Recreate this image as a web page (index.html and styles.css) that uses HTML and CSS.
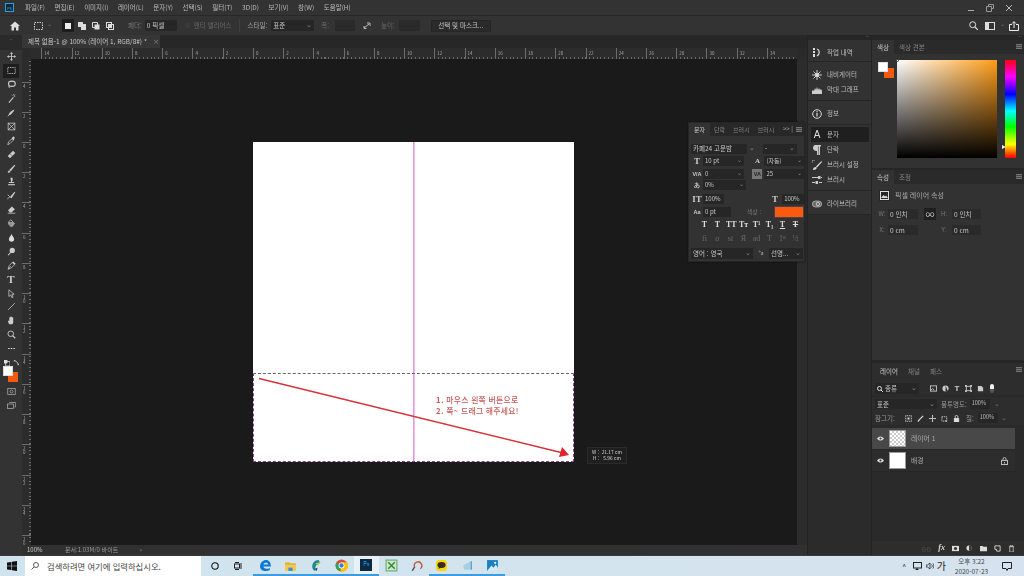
FILE: index.html
```html
<!DOCTYPE html>
<html lang="ko">
<head>
<meta charset="utf-8">
<title>Photoshop</title>
<link rel="stylesheet" href="styles.css">
</head>
<body>
<div class="app">
  <header class="menubar">
    <span class="pslogo">Ps</span>
    <nav class="menus"><span>파일(F)</span><span>편집(E)</span><span>이미지(I)</span><span>레이어(L)</span><span>문자(Y)</span><span>선택(S)</span><span>필터(T)</span><span>3D(D)</span><span>보기(V)</span><span>창(W)</span><span>도움말(H)</span></nav>
    <div class="winctl">
      <svg width="8" height="8" viewBox="0 0 8 8"><path d="M1 6.5h6" stroke="#aaa"/></svg>
      <svg width="8" height="8" viewBox="0 0 8 8"><path d="M2.5 2.5V.5h5v4H5.5M.5 2.5h5v5h-5z" fill="none" stroke="#999"/></svg>
      <svg width="8" height="8" viewBox="0 0 8 8"><path d="M1 1l6 6M7 1l-6 6" stroke="#bbb"/></svg>
    </div>
  </header>

  <div class="options">
    <svg class="home" width="10" height="10" viewBox="0 0 10 10"><path d="M5 .5L10 5H8.5v4.500H6V6.500H4V9.500H1.500V5H0z" fill="#ddd"/></svg>
    <svg class="marq" width="9" height="8" viewBox="0 0 9 8"><rect x=".5" y=".5" width="8" height="7" fill="none" stroke="#ccc" stroke-dasharray="1.500 1"/></svg>
    <span class="chev">⌄</span>
    <span class="mode mode-on"><svg width="6" height="6" viewBox="0 0 6 6"><rect width="6" height="6" fill="#eee"/></svg></span>
    <span class="mode"><svg width="8" height="8" viewBox="0 0 8 8"><path d="M0 0h5v2h3v6H3V5H0z" fill="#ddd"/></svg></span>
    <span class="mode"><svg width="8" height="8" viewBox="0 0 8 8"><path d="M.5.500h5v5h-5z" fill="none" stroke="#ddd"/><path d="M2.500 2.500h5v5h-5z" fill="#ddd"/></svg></span>
    <span class="mode"><svg width="8" height="8" viewBox="0 0 8 8"><rect x=".5" y=".5" width="5" height="5" fill="none" stroke="#ddd"/><rect x="2.500" y="2.500" width="5" height="5" fill="none" stroke="#ddd"/><rect x="2.500" y="2.500" width="3" height="3" fill="#ddd"/></svg></span>
    <span class="opt-label feather">페더:</span>
    <span class="field f-feather">0 픽셀</span>
    <span class="check"></span>
    <span class="opt-label dim">앤티 앨리어스</span>
    <span class="opt-sep"></span>
    <span class="opt-label">스타일:</span>
    <span class="field f-style">표준<i>⌄</i></span>
    <span class="opt-label dim w-label">폭:</span>
    <span class="field f-w"></span>
    <svg class="swap" width="9" height="7" viewBox="0 0 9 7"><path d="M1 6l5-4M4 1h3v3M1 4v2.500h2.500" fill="none" stroke="#bbb"/></svg>
    <span class="opt-label dim h-label">높이:</span>
    <span class="field f-h"></span>
    <span class="mask-btn">선택 및 마스크...</span>
    <div class="opt-right">
      <svg width="9" height="9" viewBox="0 0 9 9"><circle cx="3.700" cy="3.700" r="3" fill="none" stroke="#ddd"/><path d="M6 6l3 3" stroke="#ddd" stroke-width="1.200"/></svg>
      <svg width="10" height="8" viewBox="0 0 10 8"><rect x=".5" y=".5" width="9" height="7" fill="none" stroke="#ddd"/><rect x="1" y="1" width="3" height="6" fill="#ddd"/></svg>
      <span class="chev">⌄</span>
      <svg width="10" height="10" viewBox="0 0 10 10"><path d="M3 3.500H.5v6h9v-6H7M5 7V.8M3.200 2.500L5 .7l1.800 1.800" fill="none" stroke="#eee"/></svg>
    </div>
  </div>

  <main class="main">
    <aside class="toolbar">
      <div class="grip">··</div>
      <div class="tool"><svg viewBox="0 0 12 12"><path d="M6 0l2 2.500H6.600v3h3V4L12 6 9.600 8V6.500h-3v3H8L6 12 4 9.500h1.400v-3h-3V8L0 6l2.400-2v1.500h3v-3H4z" fill="#ccc"/></svg></div>
      <div class="tool tool-on"><svg viewBox="0 0 12 12"><rect x="1" y="2" width="10" height="8" fill="none" stroke="#ccc" stroke-dasharray="2 1"/></svg></div>
      <div class="tool"><svg viewBox="0 0 12 12"><ellipse cx="6.500" cy="5" rx="4.500" ry="3.500" fill="none" stroke="#ccc" stroke-width="1.500"/><path d="M3 8c-2 2 1 3 1 1" fill="none" stroke="#ccc"/></svg></div>
      <div class="tool"><svg viewBox="0 0 12 12"><path d="M2 11l6-7 1 1-6 7z" fill="#ccc"/><path d="M9 0v2M11 3h-2M7 2L6 1M11 1l-1 1" stroke="#ccc"/></svg></div>
      <div class="tool"><svg viewBox="0 0 12 12"><path d="M2 9c1-3 5-6 8-7-1 3-4 6-6 7.500z" fill="#ccc"/><path d="M1 11l2-2" stroke="#ccc"/></svg></div>
      <div class="tool"><svg viewBox="0 0 12 12"><rect x="1.500" y="1.500" width="9" height="9" fill="none" stroke="#ccc"/><path d="M1.500 1.500l9 9M10.500 1.500l-9 9" stroke="#ccc"/></svg></div>
      <div class="tool"><svg viewBox="0 0 12 12"><path d="M1 11.500L2 8l4-4 2 2-4 4z" fill="none" stroke="#ccc"/><path d="M6 3l2-2c1-1 3 1 2 2L9 6z" fill="#ccc"/></svg></div>
      <div class="tool"><svg viewBox="0 0 12 12"><path d="M1 8l7-7 3 3-7 7z" fill="#ccc"/><path d="M4.500 5.500l2 2" stroke="#333"/></svg></div>
      <div class="tool"><svg viewBox="0 0 12 12"><path d="M3 8l7-7 1 1-6 7.500z" fill="#ccc"/><path d="M1 11.500c0-2 1-3 2.500-3l1 1c0 1.500-2 2-3.500 2z" fill="#ccc"/></svg></div>
      <div class="tool"><svg viewBox="0 0 12 12"><path d="M4.500 1h3v3l-1 2.500H9.500V8h-7V6.500h3z" fill="#ccc"/><path d="M1.500 9.500h9V11h-9z" fill="#ccc"/></svg></div>
      <div class="tool"><svg viewBox="0 0 12 12"><path d="M4 8l6-7 1 1-5 7.500z" fill="#ccc"/><path d="M1 11c0-1.500 1-2.500 2.500-2.500M1 5l4 4" stroke="#ccc" fill="none"/></svg></div>
      <div class="tool"><svg viewBox="0 0 12 12"><path d="M1.500 7l5-5 4 3.500L6 10H3.500z" fill="#ccc"/><path d="M1 11h10" stroke="#ccc"/></svg></div>
      <div class="tool"><svg viewBox="0 0 12 12"><path d="M2 4l3-3 5 5-3 4C5 11 1 7 2 4z" fill="none" stroke="#ccc"/><path d="M2 4h7l1 2-3 4C5 11 2 7 2 4z" fill="#999"/></svg></div>
      <div class="tool"><svg viewBox="0 0 12 12"><path d="M6 .5C6 3 9.500 5.500 9.500 8a3.500 3.500 0 0 1-7 0C2.500 5.500 6 3 6 .5z" fill="#ddd"/></svg></div>
      <div class="tool"><svg viewBox="0 0 12 12"><circle cx="7" cy="4.500" r="3.500" fill="#ccc"/><path d="M5 7l-3.500 4" stroke="#ccc" stroke-width="1.500"/></svg></div>
      <div class="tool"><svg viewBox="0 0 12 12"><path d="M1.500 11L3 6l4-4 3 3-4 4zM1.500 11L5 7" fill="none" stroke="#ccc"/><path d="M7 2l1.500-1.500 3 3L10 5z" fill="#ccc"/></svg></div>
      <div class="tool tool-t">T</div>
      <div class="tool"><svg viewBox="0 0 12 12"><path d="M2.500 1l7 6H6.500l1.500 4-1.500.500L5 8 2.500 10z" fill="none" stroke="#ccc"/></svg></div>
      <div class="tool"><svg viewBox="0 0 12 12"><path d="M1.500 10.500l9-9" stroke="#ccc"/></svg></div>
      <div class="tool"><svg viewBox="0 0 12 12"><path d="M3 11C1 8 1 6 2 6l1 1V2.500c0-1 1-1 1.200 0V1.500c0-1 1.300-1 1.300 0v0c0-1 1.500-1 1.500 0v1c0-1 1.300-1 1.300 0V8c0 2-1 3-1.500 3z" fill="#ccc"/></svg></div>
      <div class="tool"><svg viewBox="0 0 12 12"><circle cx="5" cy="5" r="3.700" fill="none" stroke="#ccc" stroke-width="1.200"/><path d="M7.500 7.500l3.500 3.500" stroke="#ccc" stroke-width="1.600"/></svg></div>
      <div class="tool"><svg viewBox="0 0 12 12"><path d="M1.500 6h2M5 6h2M8.500 6h2" stroke="#ddd" stroke-width="1.600"/></svg></div>
      <div class="tool tool-mini">
        <svg width="7" height="7" viewBox="0 0 7 7"><rect x="2" y="2" width="5" height="5" fill="#222" stroke="#ddd"/><rect width="4" height="4" fill="#ddd"/></svg>
        <svg width="7" height="7" viewBox="0 0 7 7"><path d="M1 1c3 0 5 2 5 5M1 1l2-1M6 6l1-2" fill="none" stroke="#ccc"/></svg>
      </div>
      <div class="swatches"><span class="sw-bg"></span><span class="sw-fg"></span></div>
      <div class="tool"><svg viewBox="0 0 12 12"><rect x="1" y="2" width="10" height="8" fill="none" stroke="#aaa"/><circle cx="6" cy="6" r="2" fill="none" stroke="#aaa"/></svg></div>
      <div class="tool"><svg viewBox="0 0 12 12"><rect x=".5" y="4" width="8" height="6" fill="none" stroke="#aaa"/><path d="M3 2h8.500v6H10" fill="none" stroke="#aaa"/></svg></div>
    </aside>

    <section class="docarea">
      <div class="tabrow"><div class="doctab">제목 없음-1 @ 100% (레이어 1, RGB/8#) *<i>×</i></div></div>
      <div class="ruler-h">
        <span>14</span><span>12</span><span>10</span><span>8</span><span>6</span><span>4</span><span>2</span><span>0</span><span>2</span><span>4</span><span>6</span><span>8</span><span>10</span><span>12</span><span>14</span><span>16</span><span>18</span><span>20</span><span>22</span><span>24</span><span>26</span><span>28</span><span>30</span><span>32</span><span>34</span>
      </div>
      <div class="work">
        <div class="ruler-v">
          <span>4</span><span>2</span><span>0</span><span>2</span><span>4</span><span>6</span><span>8</span><span>10</span><span>12</span><span>14</span><span>16</span><span>18</span><span>20</span><span>22</span><span>24</span><span>26</span>
        </div>
        <div class="pasteboard">
          <div class="doc">
            <div class="guide"></div>
            <div class="selection"></div>
            <svg class="arrow" width="321" height="320" viewBox="0 0 321 320"><path d="M6 236.500L308 310.500" stroke="#d4343a" stroke-width="1.500"/><path d="M316 313l-7-8-3 10z" fill="#e0242c"/></svg>
            <div class="note"><p><b>1.</b> 마우스 왼쪽 버튼으로</p><p><b>2.</b> 쭉~ 드래그 해주세요!</p></div>
          </div>
          <div class="measure"><span>W :&nbsp;&nbsp;21.17 cm</span><span>H :&nbsp;&nbsp;&nbsp;5.96 cm</span></div>
        </div>
        <div class="vscroll"></div>
      </div>
      <div class="status"><span class="st-zoom">100%</span><span class="st-doc">문서:1.03M/0 바이트</span><span class="st-arrow">›</span></div>
    </section>

    <aside class="dock1">
      <div class="grip grip-r">··</div>
      <div class="dock-group g-hist">
        <div class="dock-item"><svg viewBox="0 0 10 10"><path d="M1 0h2v2H1zM1 3h2v2H1zM1 6h2v3H1z" fill="#ddd"/><path d="M5 1c3 1 3 5 0 7" fill="none" stroke="#ddd" stroke-width="1.200"/></svg>작업 내역</div>
      </div>
      <div class="dock-group">
        <div class="dock-item"><svg viewBox="0 0 10 10"><path d="M5 0v10M0 5h10M1.500 1.500l7 7M8.500 1.500l-7 7" stroke="#ccc"/><circle cx="5" cy="5" r="2" fill="#ddd"/></svg>내비게이터</div>
        <div class="dock-item"><svg viewBox="0 0 10 10"><path d="M0 9V6l1-1 1 1 1-3 1 2 1-3 1 3 1-2 1 2 1-1 1 2v3z" fill="#ccc"/></svg>막대 그래프</div>
      </div>
      <div class="dock-group">
        <div class="dock-item"><svg viewBox="0 0 10 10"><circle cx="5" cy="5" r="4.300" fill="none" stroke="#ddd"/><path d="M5 4v3.500" stroke="#ddd" stroke-width="1.200"/><circle cx="5" cy="2.700" r=".7" fill="#ddd"/></svg>정보</div>
      </div>
      <div class="dock-group g-char">
        <div class="dock-item dock-on"><b class="glyph-a">A</b>문자</div>
        <div class="dock-item"><svg viewBox="0 0 10 10"><path d="M3 0h6v1.500H8V10H6.500V1.500H6V10H5V6C2 6 1 4.500 1 3s1-3 2-3z" fill="#ccc"/></svg>단락</div>
        <div class="dock-item"><svg viewBox="0 0 10 10"><path d="M0 0h3M0 0v3" stroke="#aaa"/><path d="M9.500 1L4 6.500l1 1L10 2z" fill="#ddd"/><path d="M1 10c0-2 1-3 3-3l.8.800C4.500 9.500 3 10 1 10z" fill="#ddd"/></svg>브러시 설정</div>
        <div class="dock-item"><svg viewBox="0 0 10 10"><path d="M0 2.500h6M0 7.500h3M9 2.500h1M7 7.500h3" stroke="#ccc"/><rect x="6" y="1" width="2.500" height="3" fill="#ccc"/><rect x="3.500" y="6" width="2.500" height="3" fill="#ccc"/></svg>브러시</div>
      </div>
      <div class="dock-group">
        <div class="dock-item"><svg viewBox="0 0 12 10"><rect x=".5" y="1.500" width="11" height="7" rx="3.500" fill="#666" stroke="#bbb"/><circle cx="7" cy="5" r="2" fill="none" stroke="#ddd"/></svg>라이브러리</div>
      </div>
    </aside>

    <aside class="dock2">
      <div class="grip grip-r">··</div>
      <section class="pn color-pn">
        <div class="pn-tabs"><span class="pn-tab on">색상</span><span class="pn-tab">색상 견본</span><span class="pn-menu"></span></div>
        <div class="color-body">
          <div class="fgbg"><span class="sw-bg"></span><span class="sw-fg"></span></div>
          <div class="picker"><span class="pick-dot"></span></div>
          <div class="hue"><span class="hue-mark"></span></div>
        </div>
      </section>
      <section class="pn props-pn">
        <div class="pn-tabs"><span class="pn-tab on">속성</span><span class="pn-tab">조정</span><span class="pn-menu"></span></div>
        <div class="props-head"><span class="thumb-ico"><svg width="9" height="9" viewBox="0 0 9 9"><rect x=".5" y=".5" width="8" height="8" fill="none" stroke="#ddd"/><path d="M1 7l2.500-3L5 5.500 6 4.500 8 7z" fill="#ddd"/></svg></span>픽셀 레이어 속성</div>
        <div class="props-grid">
          <span class="p-l">W:</span><span class="field p-f">0 인치</span><span class="link">∞</span><span class="p-l">H:</span><span class="field p-f">0 인치</span>
          <span class="p-l">X:</span><span class="field p-f">0 cm</span><span></span><span class="p-l">Y:</span><span class="field p-f">0 cm</span>
        </div>
      </section>
      <section class="pn layers-pn">
        <div class="pn-tabs lt"><span class="pn-tab on">레이어</span><span class="pn-tab">채널</span><span class="pn-tab">패스</span><span class="pn-menu"></span></div>
        <div class="l-row l-r1">
          <span class="field l-filter"><svg width="6" height="6" viewBox="0 0 6 6"><circle cx="2.500" cy="2.500" r="2" fill="none" stroke="#ddd"/><path d="M4 4l2 2" stroke="#ddd"/></svg>종류<i>⌄</i></span>
          <svg class="l-i" viewBox="0 0 8 8"><rect x=".5" y="1" width="7" height="6" fill="none" stroke="#ccc"/><path d="M1 6l2-2 2 2" stroke="#ccc" fill="none"/></svg>
          <svg class="l-i" viewBox="0 0 8 8"><circle cx="4" cy="4" r="3.500" fill="#ccc"/><path d="M4 .5v7h3z" fill="#333"/></svg>
          <b class="l-t">T</b>
          <svg class="l-i" viewBox="0 0 8 8"><rect x="1.500" y="1.500" width="5" height="5" fill="none" stroke="#ccc"/><path d="M0 0h2v2H0zM6 0h2v2H6zM0 6h2v2H0zM6 6h2v2H6z" fill="#ccc"/></svg>
          <svg class="l-i" viewBox="0 0 8 8"><path d="M1 1h4l2 2v4H1z" fill="#ccc"/></svg>
          <span class="l-toggle"></span>
        </div>
        <div class="l-row l-r2"><span class="field l-blend">표준<i>⌄</i></span><span class="l-lab">불투명도:</span><span class="field l-pct">100%</span><i class="l-c">⌄</i></div>
        <div class="l-row l-r3">
          <span class="l-lab l-lock">잠그기:</span>
          <svg class="l-i" viewBox="0 0 8 8"><rect x=".5" y=".5" width="7" height="7" fill="#444" stroke="#ccc" stroke-dasharray="1 1"/><rect x="3" y="3" width="2" height="2" fill="#ddd"/></svg>
          <svg class="l-i" viewBox="0 0 8 8"><path d="M7 1L3 5M3 5L1 7.500" stroke="#ddd" stroke-width="1.400"/></svg>
          <svg class="l-i" viewBox="0 0 8 8"><path d="M4 0v8M0 4h8" stroke="#ccc"/><path d="M4 0L3 1.500h2zM4 8L3 6.500h2zM0 4l1.500-1v2zM8 4L6.500 3v2z" fill="#ccc"/></svg>
          <svg class="l-i" viewBox="0 0 8 8"><rect x="1" y="2" width="5.500" height="5" fill="none" stroke="#ccc" stroke-dasharray="1.500 .7"/><path d="M5 6l2 2" stroke="#ccc"/></svg>
          <svg class="l-i" viewBox="0 0 8 8"><rect x="1" y="3.500" width="6" height="4.500" fill="#ddd"/><path d="M2.500 3.500V2a1.500 1.500 0 0 1 3 0v1.500" fill="none" stroke="#ddd"/></svg>
          <span class="l-lab l-fill">칠:</span><span class="field l-pct">100%</span><i class="l-c">⌄</i>
        </div>
        <div class="l-list">
          <div class="layer layer-on">
            <svg class="eye" viewBox="0 0 10 6"><path d="M0 3c3-4 7-4 10 0-3 4-7 4-10 0z" fill="#ddd"/><circle cx="5" cy="3" r="1.500" fill="#444"/></svg>
            <span class="lthumb checker"></span><span class="lname">레이어 1</span>
          </div>
          <div class="layer">
            <svg class="eye" viewBox="0 0 10 6"><path d="M0 3c3-4 7-4 10 0-3 4-7 4-10 0z" fill="#ddd"/><circle cx="5" cy="3" r="1.500" fill="#333"/></svg>
            <span class="lthumb"></span><span class="lname">배경</span>
            <svg class="lock" width="7" height="8" viewBox="0 0 7 8"><rect x=".5" y="3.500" width="6" height="4" fill="none" stroke="#bbb"/><path d="M2 3.500V2a1.500 1.500 0 0 1 3 0v1.500" fill="none" stroke="#bbb"/><rect x="3" y="5" width="1" height="1.500" fill="#bbb"/></svg>
          </div>
        </div>
        <div class="l-foot">
          <span class="lf-dim">⊖⊖</span><b class="lf-fx">fx</b>
          <svg class="l-i" viewBox="0 0 8 8"><rect y="1" width="8" height="6" fill="#ddd"/><circle cx="4" cy="4" r="1.800" fill="#333"/></svg>
          <svg class="l-i" viewBox="0 0 8 8"><circle cx="3.500" cy="3.500" r="3" fill="#ddd"/><path d="M3.500 .5a3 3 0 0 1 0 6z" fill="#333"/></svg>
          <svg class="l-i" viewBox="0 0 8 8"><path d="M0 1h3l1 1h4v5H0z" fill="#ddd"/></svg>
          <svg class="l-i" viewBox="0 0 8 8"><path d="M1 1h6v6H3V5H1z" fill="none" stroke="#ddd"/></svg>
          <svg class="l-i" viewBox="0 0 8 8"><path d="M2 2h4v6H2zM1 1.500h6M3 1V0h2v1" fill="none" stroke="#bbb"/></svg>
        </div>
      </section>
    </aside>

    <div class="charpanel">
      <div class="pn-tabs cp-tabs"><span class="pn-tab on">문자</span><span class="pn-tab">단락</span><span class="pn-tab">브러시</span><span class="pn-tab">브러시</span><span class="cp-more">&gt;&gt; |</span><span class="pn-menu"></span></div>
      <div class="cp-row cp-font"><span class="field cf1">카페24 고운밤</span><i class="cc">⌄</i><span class="field cf2">-<i>⌄</i></span></div>
      <div class="cp-row cp-two"><b class="ci">T</b><span class="field cv">10 pt<i>⌄</i></span><b class="ci ci-s">A</b><span class="field cv">(자동)<i>⌄</i></span></div>
      <div class="cp-row cp-two"><b class="ci ci-sm">V/A</b><span class="field cv">0<i>⌄</i></span><b class="ci ci-sm boxed">VA</b><span class="field cv">25<i>⌄</i></span></div>
      <div class="cp-row cp-one"><b class="ci ci-sm">あ</b><span class="field cv">0%<i>⌄</i></span></div>
      <div class="cp-row cp-scale"><b class="ci">IT</b><span class="field cs">100%</span><b class="ci ci-r">T</b><span class="field cs">100%</span></div>
      <div class="cp-row cp-color"><b class="ci ci-sm">Aa</b><span class="field cs">0 pt</span><span class="col-lab">색상 :</span><span class="col-sw"></span></div>
      <div class="cp-row cp-styles"><b class="bold-t">T</b><i>T</i><span>TT</span><span>Tт</span><span>T¹</span><span>T₁</span><u>T</u><s>T</s></div>
      <div class="cp-row cp-open"><span>fi</span><i>σ</i><span>st</span><i>Я</i><span>ad</span><i>T</i><span>1ˢᵗ</span><span>½</span></div>
      <div class="cp-row cp-lang"><span class="field cl1">영어 : 영국<i>⌄</i></span><span class="aa">ªa</span><span class="field cl2">선명...<i>⌄</i></span></div>
    </div>
  </main>
</div>

<footer class="taskbar">
  <svg class="win" width="10" height="10" viewBox="0 0 9 9"><path d="M0 1.300L3.800.8v3.400H0zM4.300.7L9 0v4.200H4.300zM0 4.700h3.800v3.500L0 7.700zM4.300 4.700H9V9l-4.700-.7z" fill="#111"/></svg>
  <div class="search"><svg width="8" height="8" viewBox="0 0 8 8"><circle cx="5" cy="3" r="2.500" fill="none" stroke="#333" stroke-width=".8"/><path d="M3 5L.5 7.500" stroke="#333" stroke-width=".8"/></svg>검색하려면 여기에 입력하십시오.</div>
  <div class="tb-sys">
    <svg width="8" height="8" viewBox="0 0 8 8"><circle cx="4" cy="4" r="3.200" fill="none" stroke="#111" stroke-width="1.100"/></svg>
    <svg class="tb-view" width="9" height="8" viewBox="0 0 9 8"><path d="M1 .5h4M1 7.500h4M7 1v6" stroke="#222"/><rect x=".5" y="2" width="5" height="4" fill="none" stroke="#222"/></svg>
  </div>
  <div class="tb-apps">
    <span class="app-ic run"><svg viewBox="0 0 12 12"><path d="M1 7C1 3 4 1 6.500 1S11 3 11 7H4c.5 2.500 4 2.500 6 1.200v2C7 12 1 11.500 1 7zM4 5h4.500c0-2.200-4-2.200-4.500 0z" fill="#0a78d4"/></svg></span>
    <span class="app-ic run"><svg viewBox="0 0 12 12"><path d="M1 3h4l1 1h5v2H1z" fill="#e8b530"/><path d="M1 6h10v5H1z" fill="#f5c84c"/><path d="M4 8h4v3H4z" fill="#3a8fd0"/></svg></span>
    <span class="app-ic run"><svg viewBox="0 0 12 12"><path d="M9 1C5 1 3 4 3 7c0 2 1 4 3 4-1-3 1-7 4-8z" fill="#1a8a96"/><path d="M6 4l5-1-3 3z" fill="#b7c93a"/><path d="M5 9l3-1-1 3z" fill="#16506e"/></svg></span>
    <span class="app-ic run"><svg viewBox="0 0 12 12"><circle cx="6" cy="6" r="5.500" fill="#dd4b39"/><path d="M6 6L1.200 3.500A5.500 5.500 0 0 0 5 11.400z" fill="#2da44e"/><path d="M6 3h5.200A5.500 5.500 0 0 1 5 11.400z" fill="#f4c20d"/><circle cx="6" cy="6" r="2.700" fill="#fff"/><circle cx="6" cy="6" r="2" fill="#3b7ddd"/></svg></span>
    <span class="app-ic run app-active"><span class="ps-ico">Ps</span></span>
    <span class="app-ic"><svg viewBox="0 0 12 12"><rect x="1" y="1" width="10" height="10" fill="#cfe7c9" stroke="#6aa96b"/><path d="M3 3l6 6M9 3L3 9" stroke="#2f8f3f" stroke-width="1.500"/></svg></span>
    <span class="app-ic"><svg viewBox="0 0 12 12"><path d="M4 7a3.500 3.500 0 1 1 5.500 2" fill="none" stroke="#c25a3c" stroke-width="1.300"/><path d="M4.500 7L2 11" stroke="#555" stroke-width="1.300"/></svg></span>
    <span class="app-ic run"><svg viewBox="0 0 12 12"><rect x="1" y="1" width="10" height="10" rx="2.500" fill="#f7d900"/><ellipse cx="6" cy="5.500" rx="3.800" ry="2.800" fill="#3b2a20"/><path d="M3 9l1-2 2 1z" fill="#3b2a20"/></svg></span>
    <span class="app-ic run"><svg viewBox="0 0 12 12"><path d="M2 6l7-4v8H3z" fill="#a6cfe6"/><path d="M9 2h1v8H9z" fill="#4c93bd"/></svg></span>
    <span class="app-ic run"><svg viewBox="0 0 12 12"><rect x="1" y="1" width="10" height="10" fill="#1b7fc4"/><path d="M1 11l4-5 2 2 2-3 2 3v3z" fill="#d5eaf7"/><circle cx="8.500" cy="3.500" r="1" fill="#fff"/></svg></span>
  </div>
  <div class="tray">
    <span class="tray-caret">^</span>
    <svg width="9" height="8" viewBox="0 0 9 8"><rect x=".5" y=".5" width="8" height="5.500" fill="none" stroke="#222"/><path d="M4 6v2M2.500 7.500h3" stroke="#222"/></svg>
    <svg width="8" height="8" viewBox="0 0 8 8"><path d="M0 3h1.500L4 1v6L1.500 5H0zM5.500 2.500c1 1 1 2 0 3M7 1.500c1.300 1.500 1.300 3.500 0 5" fill="none" stroke="#222" stroke-width=".8"/></svg>
    <span class="ime">가</span>
    <div class="clock"><span>오후 3:22</span><span>2020-07-23</span></div>
    <svg class="notif" width="10" height="9" viewBox="0 0 10 9"><path d="M.5.500h9v6H6L5 8.500 4 6.500H.5z" fill="none" stroke="#222"/></svg>
  </div>
</footer>
</body>
</html>
```
FILE: styles.css
```css
* { box-sizing: border-box; }
html, body { margin: 0; padding: 0; }
body {
  width: 1024px; height: 576px; overflow: hidden;
  display: flex; flex-direction: column;
  background: #323232; color: #c4c4c4;
  font-family: "Noto Sans CJK KR", "Noto Sans", sans-serif;
  font-size: 6.500px; line-height: 1;
}
i { font-style: normal; }
svg { display: block; flex: none; }
p { margin: 0; }

.app { flex: none; height: 555px; display: flex; flex-direction: column; filter: blur(.3px); }
.menubar { flex: none; height: 15px; display: flex; align-items: center; background: #333; padding-left: 5px; }
.pslogo { width: 9px; height: 9px; background: #0c2a3f; border: 1px solid #2f9ed8; color: #3aa6e0; font-size: 4px; display: flex; align-items: center; justify-content: center; }
.menus { display: flex; gap: 9.500px; margin-left: 11px; font-size: 6.500px; color: #bdbdbd; }
.winctl { margin-left: auto; display: flex; gap: 9px; padding-right: 11px; align-items: center; }
.winctl svg + svg { margin-left: 2px; }

.options { flex: none; height: 20px; display: flex; align-items: center; background: #333; border-top: 1px solid #282828; padding-left: 10px; color: #aaa; }
.home { margin-right: 14px; }
.marq { margin-right: 2px; }
.chev { color: #777; font-size: 6px; width: 8px; text-align: center; margin-top: -3px; }
.mode { width: 12px; height: 13px; display: flex; align-items: center; justify-content: center; margin-right: 2px; }
.mode-on { background: #1e1e1e; margin-left: 9px; }
.opt-label { font-size: 6.500px; color: #a8a8a8; }
.dim { color: #666; }
.feather { margin-left: 10px; margin-right: 3px; color: #777; }
.field { background: #262626; color: #c8c8c8; display: flex; align-items: center; position: relative; padding-left: 2px; font-size: 6.500px; }
.field i { margin-left: auto; color: #888; padding-right: 2px; margin-top: -2px; }
.f-feather { width: 32px; height: 11px; }
.check { width: 5px; height: 5px; background: #3a3a3a; margin: 0 4px 0 8px; }
.opt-sep { width: 1px; height: 13px; background: #3f3f3f; margin: 0 7px 0 8px; }
.f-style { width: 43px; height: 11px; margin-left: 4px; }
.w-label { margin-left: 7px; margin-right: 6px; }
.f-w { width: 20px; height: 11px; background: #2a2a2a; }
.swap { margin: 0 9px 0 8px; }
.h-label { margin-right: 4px; }
.f-h { width: 21px; height: 11px; background: #2a2a2a; }
.mask-btn { margin-left: 11px; width: 60px; height: 12px; background: #2a2a2a; border: 1px solid #262626; color: #c8c8c8; display: flex; align-items: center; justify-content: center; }
.opt-right { margin-left: auto; display: flex; align-items: center; gap: 7px; padding-right: 5px; }
.opt-right .chev { margin: -3px -4px 0; }

.main { flex: 1; min-height: 0; display: flex; position: relative; background: #262626; }

.toolbar { flex: none; width: 22px; background: #333; display: flex; flex-direction: column; align-items: center; }
.grip { height: 15px; width: 100%; color: #777; font-size: 6px; text-align: center; background: #2a2a2a; padding-top: 2px; }
.grip-r { height: 5px; padding: 0 2px 0 0; text-align: right; line-height: 3px; background: #262626; flex: none; }
.tool { flex: none; width: 16px; height: 13.900px; display: flex; align-items: center; justify-content: center; }
.tool svg { width: 9px; height: 9px; }
.tool-on { background: #1e1e1e; }
.tool-t { font-family: "Liberation Serif", serif; font-size: 11px; font-weight: 700; color: #ccc; }
.tool-mini { gap: 3px; width: 18px; }
.tool-mini svg { width: 6px; height: 6px; }
.swatches { flex: none; position: relative; width: 16px; height: 16px; margin: -4px 0 3px; }
.sw-fg, .sw-bg { position: absolute; display: block; }
.sw-bg { left: 5px; top: 7px; width: 10px; height: 10px; background: #f4590f; }
.sw-fg { left: 0; top: 1px; width: 10px; height: 10px; background: #fff; border: 1px solid #ddd; }

.docarea { flex: none; width: 785px; display: flex; flex-direction: column; background: #2a2a2a; }
.tabrow { flex: none; height: 13px; background: #272727; }
.doctab { width: 138px; height: 13px; background: #363636; color: #c8c8c8; display: flex; align-items: center; padding-left: 6px; font-size: 6.500px; }
.doctab i { margin-left: 6px; color: #888; }
.ruler-h { flex: none; height: 11px; margin-left: 9px; margin-right: 10px; padding-left: 10.300px; display: flex; overflow: hidden; color: #a6a6a6; font-size: 4.500px; background: repeating-linear-gradient(90deg, #6c6c6c 0 1px, transparent 1px 3.780px) 10.300px bottom / 100% 2px no-repeat #2c2c2c; }
.ruler-h span { flex: none; width: 30.240px; height: 100%; border-left: 1px solid #6c6c6c; padding: 3px 0 0 2px; }
.work { flex: 1; min-height: 0; display: flex; }
.ruler-v { flex: none; width: 9px; overflow: hidden; padding-top: 22.500px; background: repeating-linear-gradient(180deg, #6c6c6c 0 1px, transparent 1px 3.780px) right 1.500px / 2px 100% no-repeat #2c2c2c; color: #a6a6a6; font-size: 4.500px; }
.ruler-v span { display: block; height: 30.240px; width: 100%; border-top: 1px solid #6c6c6c; padding: 1px 4px 0 1px; word-break: break-all; line-height: 4px; }
.pasteboard { flex: 1; min-width: 0; position: relative; background: #1a1a1a; padding: 83px 0 0 222px; }
.doc { position: relative; width: 321px; height: 320px; background: #fff; }
.guide { position: absolute; left: 160px; top: 0; bottom: 0; width: 2px; background: linear-gradient(90deg, #e67fe4, #f6d2f5); }
.selection { position: absolute; left: 0; right: 0; bottom: 0; top: 231px; border: 1px dashed #8c3f84; border-top-color: #666; }
.arrow { position: absolute; left: 0; top: 0; }
.note { position: absolute; left: 183px; top: 252px; color: #c65a58; font-size: 7.800px; letter-spacing: .3px; line-height: 11px; white-space: nowrap; font-weight: 500; }
.measure { position: absolute; left: 556px; top: 388px; width: 40px; height: 17px; background: #1f1f1f; border: 1px solid #2a2a2a; color: #d8d8d8; font-size: 4.800px; display: flex; flex-direction: column; align-items: center; justify-content: center; gap: 1.500px; }
.vscroll { flex: none; width: 10px; background: #2c2c2c; }
.status { flex: none; height: 10px; background: #303030; display: flex; align-items: center; color: #b0b0b0; font-size: 6px; }
.st-zoom { margin-left: 5px; width: 38px; color: #ccc; }
.st-doc { width: 75px; color: #9a9a9a; }
.st-arrow { color: #aaa; }

.dock1 { flex: none; width: 64px; background: #2b2b2b; display: flex; flex-direction: column; border-left: 1px solid #232323; }
.dock-group { padding: 5px 0 3px; background: #323232; border-bottom: 1px solid #262626; }
.g-hist { padding: 5px 0 1px; height: 22px; }
.g-char { padding: 2px 0 3px; }
.dock-item { height: 15px; display: flex; align-items: center; gap: 5px; padding-left: 4px; color: #bdbdbd; font-size: 6.500px; width: 100%; }
.dock-item svg { width: 10px; height: 10px; }
.dock-on { background: #1f1f1f; margin-left: 3px; padding-left: 1px; width: 58px; }
.glyph-a { width: 10px; text-align: center; font-family: "Liberation Sans", sans-serif; font-size: 10px; font-weight: 400; color: #ddd; }

.dock2 { flex: none; width: 153px; display: flex; flex-direction: column; background: #262626; border-left: 1px solid #232323; }
.pn { background: #323232; }
.pn-tabs { height: 14px; display: flex; align-items: stretch; background: #2a2a2a; position: relative; }
.pn-tab { padding: 0 5px; display: flex; align-items: center; color: #848484; font-size: 6.500px; }
.pn-tab.on { background: #323232; color: #c8c8c8; }
.pn-menu { position: absolute; right: 2px; top: 4px; width: 6px; height: 5px; background: repeating-linear-gradient(180deg, #777 0 1px, #444 1px 2px); }
.color-pn { height: 128px; flex: none; }
.color-body { position: relative; padding: 6px 0 0 25px; display: flex; }
.fgbg { position: absolute; left: 6px; top: 8px; width: 16px; height: 16px; }
.fgbg .sw-fg { left: 0; top: 0; }
.fgbg .sw-bg { left: 6px; top: 6px; }
.picker { flex: none; width: 100px; height: 98px; position: relative; background: linear-gradient(to top, #000, rgba(0,0,0,0)), linear-gradient(to right, #fff, #ff9d18); }
.pick-dot { position: absolute; left: -1px; top: -1px; width: 3px; height: 3px; border: 1px solid #333; border-radius: 50%; background: #fff; }
.hue { flex: none; width: 11px; height: 98px; margin-left: 8px; position: relative; background: linear-gradient(180deg, #f01 0%, #f0f 17%, #00f 35%, #0ff 52%, #0f0 68%, #ff0 86%, #f60 94%, #f00 100%); }
.hue-mark { position: absolute; left: -3px; top: 85px; border-left: 4px solid #eee; border-top: 2px solid transparent; border-bottom: 2px solid transparent; }
.props-pn { flex: none; height: 190px; margin-top: 2px; }
.props-head { display: flex; align-items: center; gap: 5px; padding: 6px 0 0 7px; font-size: 7px; color: #aaa; }
.thumb-ico { width: 11px; height: 11px; background: #262626; display: flex; align-items: center; justify-content: center; }
.props-grid { display: grid; grid-template-columns: 12px 30px 18px 16px 29px; row-gap: 5px; padding: 7px 0 0 4px; align-items: center; }
.p-l { color: #777; font-size: 6px; text-align: center; }
.p-f { height: 10px; background: #2a2a2a; }
.link { background: #1f1f1f; height: 12px; margin-left: 6px; display: flex; align-items: center; justify-content: center; color: #ccc; font-size: 9px; }
.layers-pn { flex: 1; min-height: 0; margin-top: 3px; background: #2a2a2a; display: flex; flex-direction: column; }
.lt { height: 17px; padding-left: 3px; background: #2d2d2d; }
.lt .pn-tab.on { background: transparent; }
.l-row { display: flex; align-items: center; padding-left: 3px; background: #2d2d2d; flex: none; }
.l-i { width: 7px; height: 7px; }
.l-r1 { height: 15px; gap: 5.500px; padding-top: 2px; }
.l-filter { width: 44px; height: 11px; gap: 2px; margin-right: 5px; }
.l-t { font-family: "Liberation Sans", sans-serif; font-size: 8px; color: #ccc; }
.l-toggle { width: 4px; height: 9px; border-radius: 2px; background: linear-gradient(#eee 50%, #555 50%); }
.l-r2 { height: 14px; margin-top: 2px; gap: 3px; }
.l-blend { width: 62px; height: 10px; margin-right: 1px; }
.l-lab { color: #999; }
.l-pct { width: 20px; height: 10px; background: #262626; color: #bbb; font-size: 5.500px; }
.l-c { color: #777; margin-top: -2px; margin-left: 1px; }
.l-r3 { height: 14px; gap: 5px; }
.l-lock { width: 22px; margin-right: 3px; }
.l-fill { margin-left: 1px; }
.l-r3 .l-pct { margin-left: -1px; }
.l-r3 .l-c { margin-left: -2px; }
.l-list { flex: 1; padding: 3px 9px 0 0; background: #2a2a2a; }
.layer { height: 22px; display: flex; align-items: center; background: #2d2d2d; padding-left: 5px; border-bottom: 1px solid #262626; position: relative; }
.layer-on { background: #484848; }
.eye { width: 7px; height: 5px; }
.lthumb { width: 17px; height: 17px; margin: 0 5px 0 5px; background: #fff; border: 1px solid #9a9a9a; }
.checker { background: repeating-conic-gradient(#ccc 0 25%, #fff 0 50%) 0 0 / 4px 4px; }
.lname { color: #aaa; font-size: 6.800px; }
.lock { margin-left: auto; margin-right: 7px; }
.l-foot { flex: none; height: 14px; display: flex; align-items: center; justify-content: flex-end; gap: 7px; padding: 0 9px 0 0; background: #2d2d2d; color: #ddd; }
.lf-dim { color: #666; font-size: 5px; }
.lf-fx { font-family: "Liberation Serif", serif; font-style: italic; font-size: 8px; }

.charpanel { position: absolute; left: 688px; top: 87px; width: 117px; height: 140px; background: #323232; border: 1px solid #262626; display: flex; flex-direction: column; box-shadow: 0 0 2px rgba(0,0,0,.4); }
.cp-tabs { flex: none; height: 13px; background: #282828; }
.cp-tabs .pn-tab { padding: 0 4px; font-size: 6px; }
.cp-tabs .pn-tab.on { padding: 0 5px; }
.cp-more { position: absolute; right: 11px; top: 3px; color: #aaa; font-size: 6px; }
.cp-row { display: flex; align-items: center; flex: none; padding-left: 2px; }
.cp-font { height: 11px; margin-top: 7px; }
.cf1 { width: 56px; height: 10px; }
.cc { width: 14px; color: #888; text-align: left; margin: -2px 0 0 2px; }
.cf2 { width: 34px; height: 10px; }
.cp-two { height: 12px; margin-top: 1px; }
.ci { width: 12px; text-align: center; flex: none; color: #ccc; font-family: "Liberation Serif", serif; font-size: 9px; font-weight: 700; line-height: 10px; }
.ci-s { width: 14px; margin-left: 6px; font-size: 7px; }
.ci-sm { font-size: 5.500px; font-family: "Liberation Sans", sans-serif; }
.boxed { width: 10px; margin: 0 2px 0 8px; background: #777; color: #222; }
.cv { width: 43px; height: 10px; font-size: 6px; }
.cp-two .cv:last-child { width: 41px; }
.cp-one { height: 10px; }
.cp-scale { height: 13px; margin-top: 2px; }
.cp-scale .ci-r { width: 14px; margin-left: 44px; }
.cs { width: 28px; height: 10px; font-size: 6px; }
.cp-scale .cs:last-child { width: 29px; }
.cp-color { height: 13px; position: relative; }
.col-lab { margin-left: 16px; color: #777; width: 28px; font-size: 6px; }
.col-sw { width: 30px; height: 12px; background: #fb5a0e; border: 1px solid #444; }
.cp-styles { height: 13px; padding-left: 11px; gap: 4px; color: #ddd; font-family: "Liberation Serif", serif; font-size: 8px; font-weight: 700; }
.cp-styles > * { width: 9px; text-align: center; text-decoration-thickness: 1px; }
.cp-open { height: 15px; padding-left: 11px; gap: 4px; color: #6a6a6a; font-family: "Liberation Serif", serif; font-size: 8px; }
.cp-open > * { width: 9px; text-align: center; }
.cp-lang { height: 13px; margin-top: 1px; }
.cl1 { width: 62px; height: 11px; }
.aa { width: 16px; text-align: center; color: #bbb; font-size: 5.500px; }
.cl2 { width: 34px; height: 11px; }

.taskbar { flex: none; height: 21px; display: flex; align-items: center; background: linear-gradient(90deg, #cfe4ee, #d6e3ef); color: #222; border-top: 1px solid #3a3a3a; padding-left: 7px; }
.search { margin-left: 8px; width: 176px; height: 20px; background: #fff; display: flex; align-items: center; gap: 8px; padding-left: 6px; font-size: 8.300px; color: #444; }
.tb-sys { display: flex; align-items: center; gap: 15px; margin-left: 10px; }
.tb-apps { display: flex; margin-left: 10px; height: 100%; }
.app-ic { width: 25.200px; height: 100%; display: flex; align-items: center; justify-content: center; border-bottom: 2px solid transparent; }
.app-ic svg { width: 13px; height: 13px; }
.run { border-bottom-color: #3b9ae0; }
.app-active { background: #e8f1f6; }
.ps-ico { width: 12px; height: 12px; background: #0b2a42; color: #31a8ff; font-size: 5.500px; display: flex; align-items: center; justify-content: center; }
.tray { margin-left: auto; display: flex; align-items: center; gap: 4.500px; padding-right: 12px; color: #222; }
.tray-caret { font-size: 7px; width: 8px; text-align: center; }
.ime { font-size: 10px; margin-left: -2px; }
.clock { display: flex; flex-direction: column; align-items: center; gap: 3px; margin-left: 1px; width: 40px; font-size: 6.500px; color: #444; }
.notif { margin-left: 6px; }
```
